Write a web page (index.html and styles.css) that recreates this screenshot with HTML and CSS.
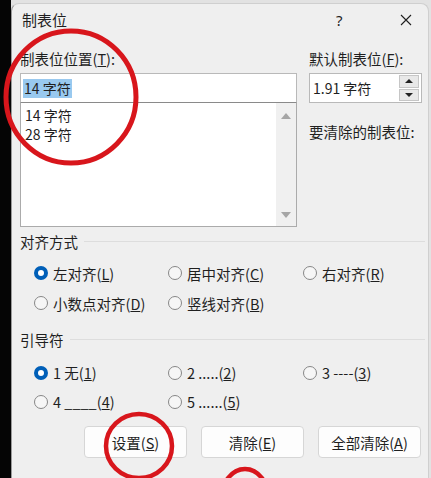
FILE: index.html
```html
<!DOCTYPE html>
<html lang="zh-CN">
<head>
    <meta charset="UTF-8">
    <meta name="viewport" content="width=device-width, initial-scale=1.0">
    <title>制表位</title>
    <link rel="stylesheet" href="styles.css">
</head>
<body>

    <div class="screen">
        <div class="backdrop"></div>

        <div class="dialog">
            <!-- 标题栏 -->
            <div class="titlebar">
                <span class="title">制表位</span>
                <span class="help">?</span>
                <span class="close">
                    <svg width="12" height="12" viewBox="0 0 12 12">
                        <path d="M1 1 L11 11 M11 1 L1 11" stroke="#1f1f1f" stroke-width="1.1" fill="none"/>
                    </svg>
                </span>
            </div>

            <div class="content">
                <div class="top">
                    <div class="left-col">
                        <div class="label">制表位位置(<u>T</u>):</div>
                        <div class="textbox"><span class="selected">14 字符</span></div>
                        <div class="listbox">
                            <div class="items">
                                <div>14 字符</div>
                                <div>28 字符</div>
                            </div>
                            <div class="scrollbar">
                                <span class="arrow up"></span>
                                <span class="arrow down"></span>
                            </div>
                        </div>
                    </div>

                    <div class="right-col">
                        <div class="label">默认制表位(<u>F</u>):</div>
                        <div class="spinbox">
                            <span class="value">1.91 字符</span>
                            <div class="spin-buttons">
                                <span class="spin"><span class="tri up"></span></span>
                                <span class="spin"><span class="tri down"></span></span>
                            </div>
                        </div>
                        <div class="label clear-label">要清除的制表位:</div>
                    </div>
                </div>

                <!-- 对齐方式 -->
                <div class="group-title"><span>对齐方式</span><span class="rule"></span></div>
                <div class="radios">
                    <label class="radio checked"><span class="dot"></span>左对齐(<u>L</u>)</label>
                    <label class="radio"><span class="dot"></span>居中对齐(<u>C</u>)</label>
                    <label class="radio"><span class="dot"></span>右对齐(<u>R</u>)</label>
                    <label class="radio"><span class="dot"></span>小数点对齐(<u>D</u>)</label>
                    <label class="radio"><span class="dot"></span>竖线对齐(<u>B</u>)</label>
                </div>

                <!-- 引导符 -->
                <div class="group-title leader-title"><span>引导符</span><span class="rule"></span></div>
                <div class="radios leader">
                    <label class="radio checked"><span class="dot"></span>1 无(<u>1</u>)</label>
                    <label class="radio"><span class="dot"></span>2 .....(<u>2</u>)</label>
                    <label class="radio"><span class="dot"></span>3 ----(<u>3</u>)</label>
                    <label class="radio"><span class="dot"></span>4 ____(<u>4</u>)</label>
                    <label class="radio"><span class="dot"></span>5 ......(<u>5</u>)</label>
                </div>

                <div class="buttons">
                    <button class="btn">设置(<u>S</u>)</button>
                    <button class="btn">清除(<u>E</u>)</button>
                    <button class="btn">全部清除(<u>A</u>)</button>
                </div>
            </div>
        </div>

        <!-- 红色标注圈 -->
        <svg class="marks" width="431" height="478" viewBox="0 0 431 478">
            <ellipse cx="71" cy="97" rx="65" ry="66" stroke="#d8161c" stroke-width="5" fill="none"/>
            <ellipse cx="139" cy="446" rx="33" ry="32" stroke="#d8161c" stroke-width="4.5" fill="none"/>
            <ellipse cx="245" cy="500" rx="24" ry="31" stroke="#d8161c" stroke-width="4.5" fill="none"/>
        </svg>
    </div>

</body>
</html>
```

FILE: styles.css
```css
body {
    margin: 0;
    background: #e2e2e2;
    font-family: 'Noto Sans CJK SC', 'Noto Sans', sans-serif;
    font-size: 14px;
    color: #1f1f1f;
}

.screen {
    position: relative;
    width: 431px;
    height: 478px;
    display: flex;
    overflow: hidden;
}

.backdrop {
    width: 11px;
    background: #050505;
}

.dialog {
    width: 418px;
    margin-top: 3px;
    background: #efefef;
    border-left: 1px solid #9a9a9a;
    border-top: 1px solid #cfcfcf;
    border-right: 1px solid #cfcfcf;
    border-radius: 8px 8px 0 0;
    box-sizing: border-box;
}

.titlebar {
    height: 31px;
    display: flex;
    align-items: center;
    padding-left: 10px;
    font-size: 15px;
}

.title {
    flex: 1;
}

.help {
    width: 20px;
    margin-right: 44px;
    font-family: 'Noto Sans', sans-serif;
    font-size: 15px;
}

.close {
    width: 28px;
    display: flex;
    align-items: center;
}

.content {
    padding: 14px 3px 0 8px;
}

.label {
    height: 20px;
    line-height: 20px;
    font-size: 14.5px;
}

.top {
    display: flex;
}

.left-col {
    width: 277px;
}

.right-col {
    width: 113px;
    margin-left: 12px;
}

.textbox {
    margin-top: 4px;
    height: 30px;
    background: #fff;
    border: 1px solid #b9b9b9;
    border-bottom-color: #8a8a8a;
    box-sizing: border-box;
    padding: 4px 2px;
}

.selected {
    display: inline-block;
    background: #99c9ef;
    line-height: 19px;
    padding: 0 1px;
}

.listbox {
    height: 124px;
    background: #fff;
    border: 1px solid #ababab;
    border-top: none;
    box-sizing: border-box;
    display: flex;
}

.items {
    flex: 1;
    padding: 3px 4px;
    line-height: 19px;
}

.scrollbar {
    width: 20px;
    background: #f0f0f0;
    display: flex;
    flex-direction: column;
    justify-content: space-between;
    align-items: center;
    padding: 10px 0 8px;
}

.arrow {
    width: 0;
    height: 0;
    border-left: 5px solid transparent;
    border-right: 5px solid transparent;
}

.arrow.up {
    border-bottom: 6px solid #a6a6a6;
}

.arrow.down {
    border-top: 6px solid #a6a6a6;
}

.spinbox {
    margin-top: 4px;
    height: 30px;
    background: #fff;
    border: 1px solid #b9b9b9;
    box-sizing: border-box;
    display: flex;
    align-items: center;
    padding-left: 3px;
}

.value {
    flex: 1;
}

.spin-buttons {
    width: 20px;
    height: 26px;
    display: flex;
    flex-direction: column;
    gap: 1px;
    margin-right: 2px;
}

.spin {
    flex: 1;
    background: #e8e8e8;
    border: 1px solid #c6c6c6;
    display: flex;
    justify-content: center;
    align-items: center;
}

.tri {
    width: 0;
    height: 0;
    border-left: 4px solid transparent;
    border-right: 4px solid transparent;
}

.tri.up {
    border-bottom: 4px solid #222;
}

.tri.down {
    border-top: 4px solid #222;
}

.clear-label {
    margin-top: 19px;
}

.group-title {
    display: flex;
    align-items: center;
    height: 20px;
    margin-top: 4px;
    font-size: 14.5px;
}

.rule {
    flex: 1;
    border-top: 1px solid #dddddd;
    margin-left: 6px;
}

.leader-title {
    margin-top: 11px;
}

.radios {
    display: grid;
    grid-template-columns: 134px 135px 110px;
    grid-auto-rows: 30px;
    margin-top: 7px;
    padding-left: 14px;
}

.radios.leader {
    grid-auto-rows: 29px;
    margin-top: 9px;
}

.radio {
    display: flex;
    align-items: center;
    font-size: 14.5px;
    white-space: nowrap;
}

.dot {
    width: 14px;
    height: 14px;
    border: 1px solid #878787;
    background: #f6f6f6;
    border-radius: 50%;
    box-sizing: border-box;
    margin-right: 5px;
}

.radio.checked .dot {
    border: 4px solid #005fb8;
    background: #fff;
}

.buttons {
    display: flex;
    gap: 14px;
    margin-top: 10px;
    padding-left: 64px;
}

.btn {
    height: 32px;
    width: 103px;
    background: #fdfdfd;
    border: 1px solid #d6d6d6;
    border-radius: 4px;
    font-family: inherit;
    font-size: 14.5px;
    color: #1f1f1f;
    padding: 0;
}

.marks {
    position: absolute;
    top: 0;
    left: 0;
    pointer-events: none;
}
```
